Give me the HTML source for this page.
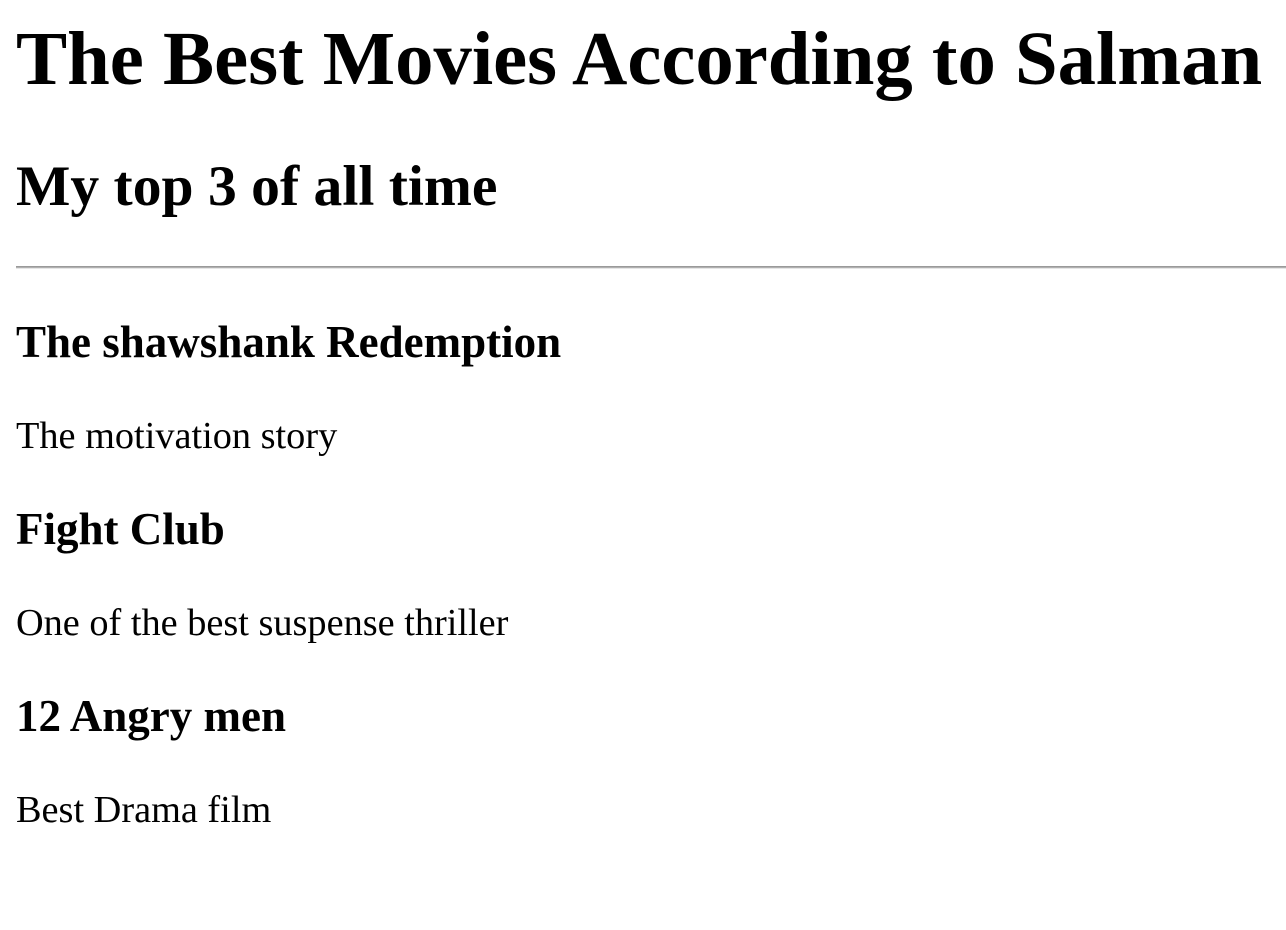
<!DOCTYPE html>
<html><head><style>
html,body{margin:0;padding:0;background:#fff;width:1286px;height:930px;overflow:hidden;position:relative}
.t{position:absolute;left:16px;margin:0;line-height:1;font-family:"Liberation Serif",serif;color:#000;white-space:nowrap}
.h1{font-size:76.7px;font-weight:bold;top:21px}
.h2{font-size:57.6px;font-weight:bold;top:158px}
.h3{font-size:45px;font-weight:bold}
.p{font-size:38.3px}
.hr{position:absolute;left:16px;right:0;top:266px;height:1px;border-top:1px solid #9a9a9a;border-bottom:1px solid #e6e6e6;background:#b0b0b0}
</style></head><body>
<div class="t h1">The Best Movies According to Salman</div>
<div class="t h2">My top 3 of all time</div>
<div class="hr"></div>
<div class="t h3" style="top:320px">The shawshank Redemption</div>
<div class="t p" style="top:417px">The motivation story</div>
<div class="t h3" style="top:507px">Fight Club</div>
<div class="t p" style="top:604px">One of the best suspense thriller</div>
<div class="t h3" style="top:694px">12 Angry men</div>
<div class="t p" style="top:791px">Best Drama film</div>
</body></html>
